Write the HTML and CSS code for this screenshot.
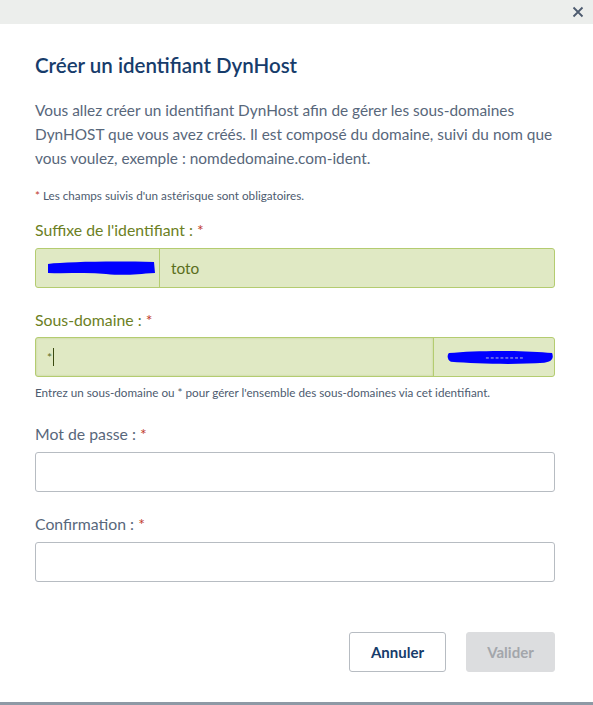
FILE: index.html
```html
<!DOCTYPE html>
<html lang="fr">
<head>
<meta charset="utf-8">
<link rel="stylesheet" href="styles.css">
</head>
<body>
<div class="dialog">
  <div class="topbar">
    <button class="close" aria-label="Fermer">
      <svg width="12" height="12" viewBox="0 0 12 12"><path d="M1.5 1.5 L10.5 10.5 M10.5 1.5 L1.5 10.5" stroke="#4d5b6f" stroke-width="1.8" fill="none"/></svg>
    </button>
  </div>
  <div class="content">
    <h1 class="title">Créer un identifiant DynHost</h1>
    <p class="intro">Vous allez créer un identifiant DynHost afin de gérer les sous-domaines DynHOST que vous avez créés. Il est composé du domaine, suivi du nom que vous voulez, exemple : nomdedomaine.com-ident.</p>
    <p class="note"><span class="req">*</span> Les champs suivis d'un astérisque sont obligatoires.</p>

    <label class="label valid lbl-first">Suffixe de l'identifiant : <span class="req">*</span></label>
    <div class="group valid">
      <div class="addon addon-left">
        <svg class="scribble" width="110" height="16" viewBox="0 0 110 16"><path d="M2 4 C20 2 60 1 108 2 L109 13 C90 14 80 16 60 14 C40 12 20 14 2 13 Z" fill="#0000ff"/></svg>
      </div>
      <div class="field">toto</div>
    </div>

    <label class="label valid lbl-second">Sous-domaine : <span class="req">*</span></label>
    <div class="group valid">
      <div class="field field-focus">*<span class="caret"></span></div>
      <div class="addon addon-right">
        <svg class="scribble" width="110" height="16" viewBox="0 0 110 16"><path d="M2 4 C30 1 80 1 108 4 C110 9 108 13 100 14 C70 16 30 15 4 13 C0 11 0 6 2 4 Z" fill="#0000ff"/><path d="M40 9 L78 9" stroke="#bfc5d0" stroke-width="1" stroke-dasharray="3 2"/></svg>
      </div>
    </div>
    <p class="help">Entrez un sous-domaine ou * pour gérer l'ensemble des sous-domaines via cet identifiant.</p>

    <label class="label lbl-third">Mot de passe : <span class="req">*</span></label>
    <div class="input"></div>

    <label class="label lbl-fourth">Confirmation : <span class="req">*</span></label>
    <div class="input"></div>

    <div class="actions">
      <button class="btn btn-cancel">Annuler</button>
      <button class="btn btn-disabled">Valider</button>
    </div>
  </div>
</div>
</body>
</html>
```

FILE: styles.css
```css
* { box-sizing: border-box; }
html, body { margin: 0; padding: 0; background: #fff; }
body { font-family: "Source Sans Pro", Lato, "Noto Sans", sans-serif; color: #4d5b6f; }

.dialog {
  width: 593px;
  height: 705px;
  border-bottom: 3px solid #8e99a5;
  display: flex;
  flex-direction: column;
}

.topbar {
  height: 24px;
  background: #eceeec;
  display: flex;
  justify-content: flex-end;
  align-items: center;
  padding-right: 9px;
}
.close {
  border: 0;
  background: transparent;
  padding: 0;
  width: 12px;
  height: 12px;
  display: flex;
  align-items: center;
  justify-content: center;
}

.content {
  padding: 0 38px 0 35px;
  display: flex;
  flex-direction: column;
}

.title {
  margin: 29px 0 0;
  font-size: 20.5px;
  line-height: 24px;
  font-weight: 600;
  color: #173c6b;
}

.intro {
  margin: 21px 0 0;
  font-size: 15.4px;
  line-height: 24px;
  color: #58677b;
}

.note {
  margin: 17px 0 0;
  font-size: 11.7px;
  line-height: 16px;
  color: #4d5b6f;
}
.req { color: #c0392b; }

.label {
  display: block;
  font-size: 15.8px;
  line-height: 20px;
  color: #58677b;
  margin-bottom: 8px;
}
.label.valid { color: #6c8024; }
.lbl-first { margin-top: 17px; }
.lbl-second { margin-top: 22px; margin-bottom: 7px; }
.lbl-third { margin-top: 24px; }
.lbl-fourth { margin-top: 22px; }

.group {
  display: flex;
  height: 40px;
  border: 1px solid #b4cc70;
  border-radius: 3px;
  background: #e0e9c4;
  overflow: hidden;
}
.addon {
  display: flex;
  align-items: center;
  padding-left: 10px;
}
.addon-left {
  width: 124px;
  border-right: 1px solid #b4cc70;
}
.addon-right {
  width: 121px;
  border-left: 1px solid #b4cc70;
  padding-left: 13px;
}
.field {
  flex: 1;
  display: flex;
  align-items: center;
  padding-left: 11px;
  font-size: 15.4px;
  color: #5a6e1c;
}
.field-focus {
  font-size: 12px;
  box-shadow: inset 0 0 2px rgba(120, 150, 40, 0.35);
}
.caret {
  display: inline-block;
  width: 1px;
  height: 18px;
  background: #3a4a10;
  margin-left: 1px;
}

.help {
  margin: 7px 0 0;
  font-size: 11.7px;
  line-height: 16px;
  color: #4d5b6f;
}

.input {
  height: 40px;
  border: 1px solid #b7bcc2;
  border-radius: 3px;
  background: #fff;
}

.actions {
  margin-top: 50px;
  display: flex;
  justify-content: flex-end;
  gap: 20px;
}
.btn {
  height: 40px;
  border-radius: 3px;
  font-family: "Source Sans Pro", Lato, "Noto Sans", sans-serif;
  font-size: 15px;
  font-weight: 700;
}
.btn-cancel {
  width: 97px;
  background: #fff;
  border: 1px solid #b7bcc2;
  color: #173c6b;
}
.btn-disabled {
  width: 89px;
  background: #dcdddf;
  border: 1px solid #dcdddf;
  color: #a3a6ab;
}
```
